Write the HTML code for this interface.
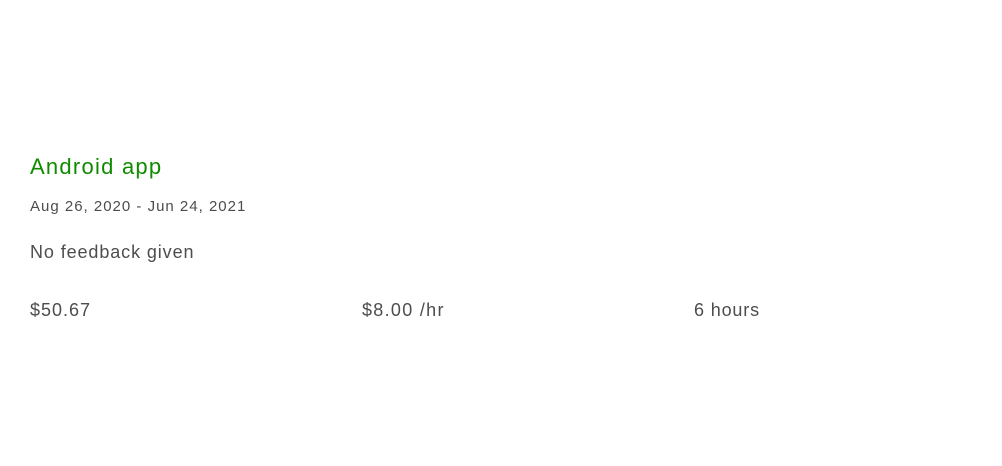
<!DOCTYPE html>
<html><head><style>
body{margin:0;width:1002px;height:466px;background:#fff;font-family:"Liberation Sans",sans-serif;position:relative;overflow:hidden}
div{position:absolute;white-space:nowrap}
.t{left:30px;top:154px;font-size:22px;color:#108a00;letter-spacing:1.25px}
.d{left:30px;top:198px;font-size:15px;color:#4d4d4d;letter-spacing:1px}
.f{left:30px;top:242px;font-size:18px;color:#4d4d4d;letter-spacing:0.9px}
.v{top:300px;font-size:18px;color:#4d4d4d;letter-spacing:1px}
</style></head><body>
<div class="t">Android app</div>
<div class="d">Aug 26, 2020 - Jun 24, 2021</div>
<div class="f">No feedback given</div>
<div class="v" style="left:30px">$50.67</div>
<div class="v" style="left:362px;letter-spacing:1.3px">$8.00 /hr</div>
<div class="v" style="left:694px;letter-spacing:0.85px">6 hours</div>
</body></html>
